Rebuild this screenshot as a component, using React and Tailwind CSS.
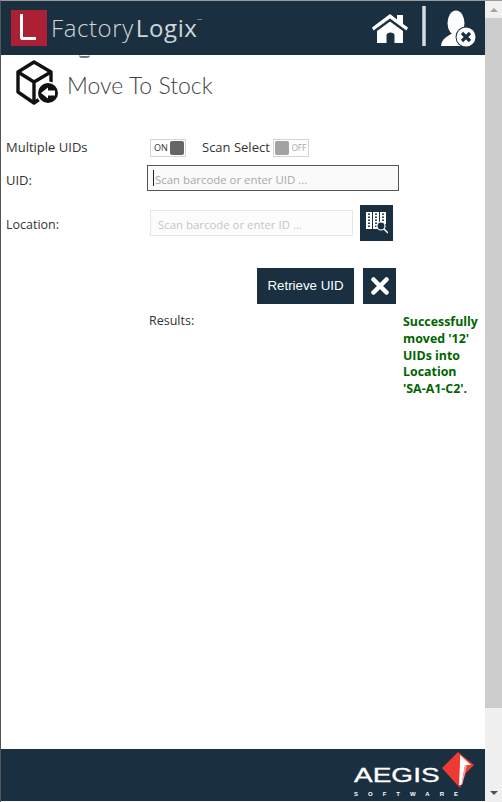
const sans = { fontFamily: '"Open Sans","Noto Sans",sans-serif' };

function Box() {
  return (
    <svg width="46" height="46" viewBox="0 0 46 46" className="shrink-0">
      <g fill="none" stroke="#111" strokeWidth="3.4" strokeLinejoin="round">
        <path d="M19 2 L36 12 V31 L19 43 L3 32 V12 Z" />
        <path d="M3 12 L19 22 L36 12 M19 22 V43" />
      </g>
      <circle cx="33" cy="33" r="11.5" fill="#fff" />
      <circle cx="33" cy="33" r="10" fill="#111" />
      <path d="M26 33 L33 27.5 V30.5 H40 V35.5 H33 V38.5 Z" fill="#fff" />
    </svg>
  );
}

function Home() {
  return (
    <svg width="36" height="30" viewBox="0 0 36 30">
      <path d="M0 14.5 L18 1 L25 6.5 V2 H31 V11 L36 14.5 L34.5 17.5 L18 5.5 L1.5 17.5 Z" fill="#fff" />
      <path d="M5 18 L18 8.5 L31 18 V30 H22.5 V22 C22.5 18.5 14.5 18.5 14.5 22 V30 H5 Z" fill="#fff" />
    </svg>
  );
}

function UserX() {
  return (
    <svg width="36" height="38" viewBox="0 0 36 38">
      <ellipse cx="15" cy="13" rx="8.5" ry="12.5" fill="#fff" />
      <path d="M0 36 C1 28 6 27 10 24 H20 C24 27 29 28 30 36 Z" fill="#fff" />
      <circle cx="25" cy="27" r="10.5" fill="#1a3040" />
      <circle cx="25" cy="27" r="9.5" fill="#fff" />
      <path d="M21 23 L29 31 M29 23 L21 31" stroke="#1a3040" strokeWidth="3.2" />
    </svg>
  );
}

function Shelf() {
  const dots = [1.5, 4.5, 7.5, 10.5, 13.5];
  return (
    <svg width="22" height="22" viewBox="0 0 22 22">
      <g fill="#fff">
        <rect x="0" y="0" width="6" height="17" />
        <rect x="7" y="0" width="6" height="17" />
        <rect x="14" y="0" width="6" height="12" />
      </g>
      <g fill="#1a3040">
        {dots.map((y) => <rect key={`a${y}`} x="2" y={y} width="2" height="1.4" />)}
        {dots.map((y) => <rect key={`b${y}`} x="9" y={y} width="2" height="1.4" />)}
        {dots.slice(0, 3).map((y) => <rect key={`c${y}`} x="16" y={y} width="2" height="1.4" />)}
      </g>
      <circle cx="15" cy="14" r="4" fill="#1a3040" stroke="#fff" strokeWidth="1.2" />
      <path d="M18 17 L22 21" stroke="#fff" strokeWidth="1.5" />
    </svg>
  );
}

function AegisMark() {
  return (
    <svg width="32" height="36" viewBox="0 0 32 36">
      <path d="M16 0 L32 13 L24 21 L18 36 L0 16 Z" fill="#ee3a32" />
      <path d="M18 3 L29 13 H23 L19.5 33 L17 33 L18 11 Z" fill="#fff" />
      <path d="M23 13 H25 L20.5 32 L19.5 33 Z" fill="#e9a49e" />
    </svg>
  );
}

export default function App() {
  return (
    <div className="flex h-[802px] w-[502px] overflow-hidden border-t border-l border-t-[#9a9a9a] border-l-[#555] bg-white text-[13px] text-[#333]" style={sans}>
      <div className="flex min-w-0 flex-1 flex-col">
        <header className="flex h-[54px] shrink-0 items-center bg-[#1a3040] pl-[10px] pr-[8px]">
          <div className="flex h-[36px] w-[36px] items-center justify-center bg-[#ab2035]">
            <div className="mb-[2px] ml-[-2px] h-[26px] w-[16px] rounded-bl-[3px] border-b-[3px] border-l-[3px] border-white" />
          </div>
          <div className="ml-[4px] flex items-start text-[24px] leading-none tracking-[0.6px] text-[#cfd5da]">
            <span className="font-light">Factory</span>
            <span className="ml-[2px] font-medium">Logix</span>
            <span className="mt-[3px] h-px w-[5px] bg-[#6f818e]" />
          </div>
          <div className="ml-auto flex items-center">
            <Home />
            <div className="mb-[4px] ml-[14px] mr-[15px] h-[40px] w-[4px] bg-gradient-to-r from-[#889aa6] via-[#f2f2f2] to-[#889aa6]" />
            <div className="mt-[2px]"><UserX /></div>
          </div>
        </header>

        <main className="relative min-h-0 flex-1">
          <div className="absolute left-[78px] top-0 h-[3px] w-[11px] rounded-b-full border-b-2 border-[#777]" />
          <div className="ml-[14px] mt-[5px] flex h-[46px] items-center">
            <Box />
            <h1 className="ml-[6px] mt-[4px] text-[23px] font-light leading-none text-[#444]" style={{ fontFamily: 'Lato,sans-serif' }}>Move To Stock</h1>
          </div>

          <div className="mt-[30px] flex h-[24px] items-center pl-[5px]">
            <span className="w-[144px]">Multiple UIDs</span>
            <div className="flex h-[18px] w-[36px] items-center justify-between border border-[#d4d4d4] pl-[3px] pr-[1px] text-[9px] text-[#333]">
              <span>ON</span>
              <span className="h-[14px] w-[14px] rounded-[2px] bg-[#666]" />
            </div>
            <span className="ml-[16px] w-[71px]">Scan Select</span>
            <div className="flex h-[18px] w-[36px] items-center justify-between border border-[#d4d4d4] pl-[1px] pr-[2px] text-[8.5px] tracking-[-0.3px] text-[#aaa]">
              <span className="h-[14px] w-[14px] rounded-[2px] bg-[#a3a3a3]" />
              <span>OFF</span>
            </div>
          </div>

          <div className="mt-[5px] flex items-center pl-[5px]">
            <span className="mt-[5px] w-[141px]">UID:</span>
            <div className="flex h-[26px] w-[252px] items-center border border-[#555] bg-[#fafafa] pl-[5px] pt-[3px] text-[11.4px] text-[#a9a9a9]">
              <span className="mr-px mt-[-3px] h-[16px] w-px bg-[#222]" />
              Scan barcode or enter UID ...
            </div>
          </div>

          <div className="mt-[14px] flex items-center pl-[5px]">
            <span className="mt-[4px] w-[144px] text-[12.5px]">Location:</span>
            <div className="flex h-[26px] w-[203px] items-center border border-[#e6e6e6] bg-[#fcfcfc] pl-[7px] pt-[3px] text-[11.4px] text-[#c6c6c6]">
              Scan barcode or enter ID ...
            </div>
            <div className="ml-[7px] flex h-[36px] w-[33px] items-center justify-center bg-[#1a3040]">
              <Shelf />
            </div>
          </div>

          <div className="mt-[27px] flex pl-[256px]">
            <button className="h-[36px] w-[97px] bg-[#1a3040] text-[13.3px] text-white" style={{ fontFamily: '"Liberation Sans",sans-serif' }}>Retrieve UID</button>
            <div className="ml-[9px] flex h-[36px] w-[33px] items-center justify-center bg-[#1a3040]">
              <svg width="18" height="18" viewBox="0 0 18 18"><path d="M2.5 2.5 L15.5 15.5 M15.5 2.5 L2.5 15.5" stroke="#fff" strokeWidth="4.5" strokeLinecap="round" /></svg>
            </div>
          </div>

          <div className="mt-[10px] flex pl-[148px]">
            <span className="mt-[-2px] w-[254px] text-[12.5px]">Results:</span>
            <p className="w-[78px] text-[12.4px] font-bold leading-[16.8px] text-[#006400]">Successfully moved '12' UIDs into Location 'SA-A1-C2'.</p>
          </div>
        </main>

        <footer className="mb-px flex h-[52px] shrink-0 items-start justify-end bg-[#1a3040] pr-[11px] pt-[3px]">
          <div className="relative h-[49px] w-[120px]" style={{ fontFamily: '"Liberation Sans",sans-serif' }}>
            <div className="absolute right-0 top-0"><AegisMark /></div>
            <div className="flex h-full flex-col pt-[13px] text-white">
              <span className="w-fit origin-left text-[20px] leading-[20px] [-webkit-text-stroke:0.3px_white] [transform:scaleX(1.4)]">AEGIS</span>
              <span className="mt-[6px] whitespace-nowrap text-[6px] font-bold leading-[7px] tracking-[10px]">SOFTWARE</span>
            </div>
          </div>
        </footer>
      </div>

      <div className="flex w-[17px] shrink-0 flex-col bg-[#f0f0f0]">
        <div className="flex h-[17px] items-center justify-center">
          <span className="h-0 w-0 border-x-[4px] border-b-[4px] border-x-transparent border-b-[#a3a3a3]" />
        </div>
        <div className="h-[690px] bg-[#cdcdcd]" />
        <div className="mt-auto flex h-[17px] items-center justify-center pb-[2px]">
          <span className="h-0 w-0 border-x-[4px] border-t-[4px] border-x-transparent border-t-[#505050]" />
        </div>
      </div>
    </div>
  );
}
